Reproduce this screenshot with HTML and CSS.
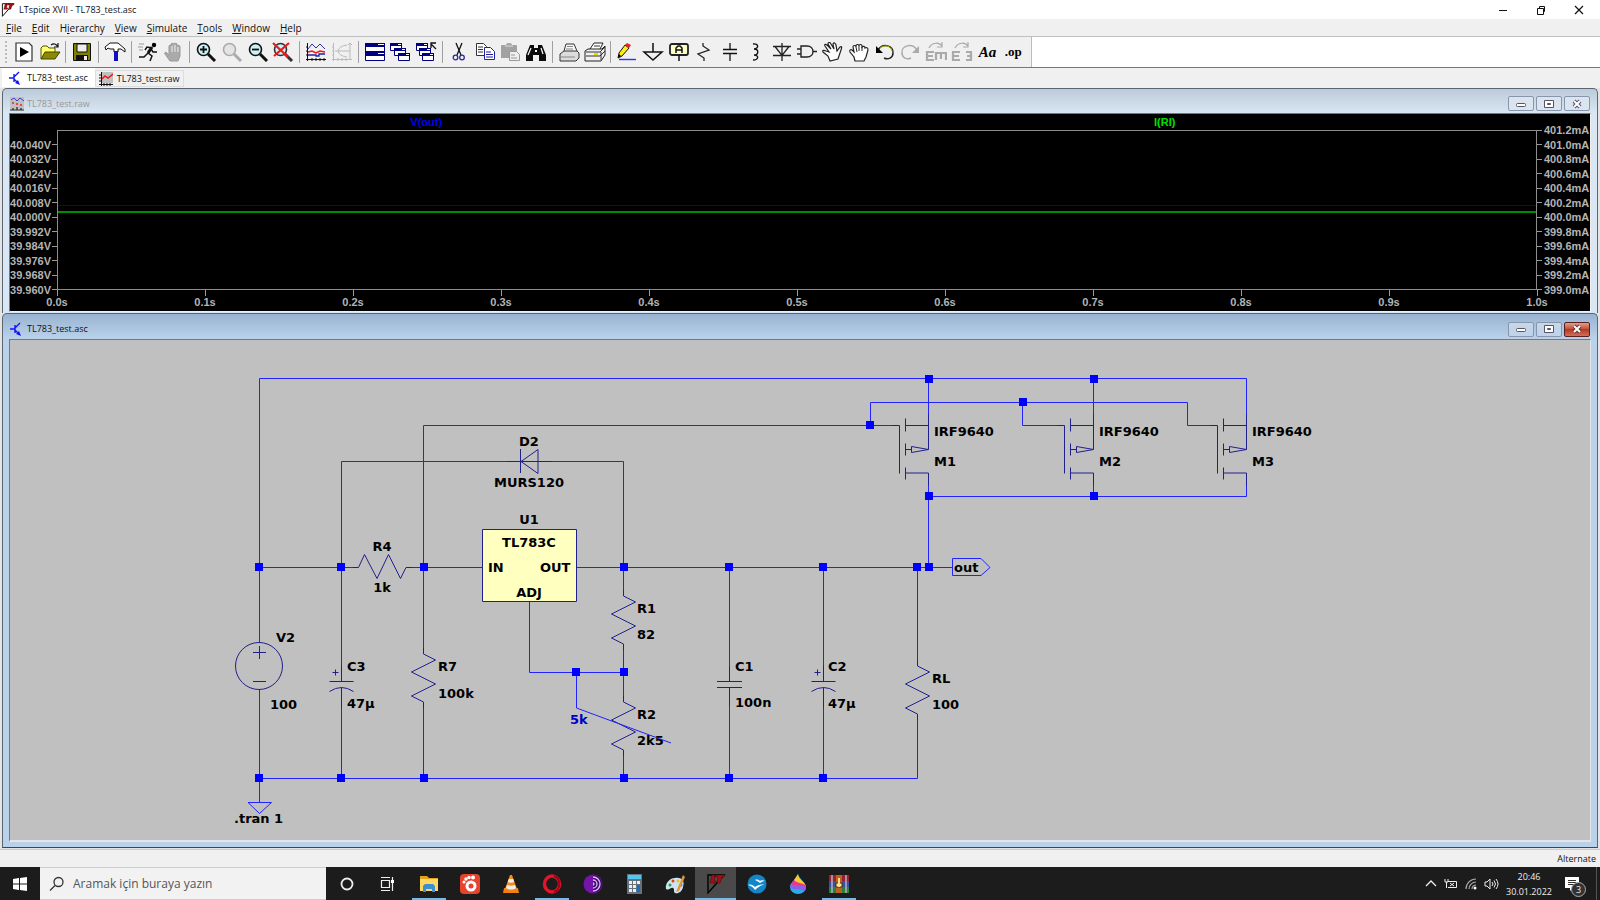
FILE: index.html
```html
<!DOCTYPE html>
<html lang="tr">
<head>
<meta charset="utf-8">
<title>LTspice XVII - TL783_test.asc</title>
<link rel="stylesheet" href="styles.css">
</head>
<body>
<svg class="defs" aria-hidden="true">
  <defs>
    <symbol id="lt-logo" viewBox="0 0 20 20"><path d="M2 1V19L18 1Z" fill="none" stroke="currentColor" stroke-width="1.4"/><path d="M6 1 4 9h5l1-2H8l1-6zM10 1l-1 2h3l-1 6h3l2-6h2l1-2z" fill="#a01018" stroke="#500" stroke-width=".5"/></symbol>
    <symbol id="transistor" viewBox="0 0 14 14"><path d="M0 7h5M5 3v8M5 6l5-5M5 8l4 4" fill="none" stroke="#1414f0" stroke-width="1.4"/><path d="M11 14 6 12l3-3z" fill="#1414f0"/></symbol>
    <symbol id="wave-doc" viewBox="0 0 14 14"><path d="M0 0h14v12H0z" fill="#c0c0c0"/><path d="M1 3 4 1l3 3 3-3 4 3" fill="none" stroke="#3c3ce0"/><path d="M2 6h2M6 7h2M10 8h2" stroke="#f02020" stroke-width="1.5"/><path d="M0 13h14M3 11v2M7 10v3M11 11v2" stroke="#222" stroke-width="1.2"/></symbol>
    <symbol id="lens" viewBox="0 0 22 20"><circle cx="8.500" cy="7.500" r="6" stroke="currentColor" stroke-width="1.6"/><path d="m13 12 7 7" stroke="currentColor" stroke-width="3"/></symbol>
    <symbol id="fist" viewBox="0 0 22 20"><path d="M7 19 6 15 2 10c-1-2 1-3 2-2l2 2-1-5c0-2 3-2 3 0V4c0-2 3-2 3 0 0-2 3-2 3 0v1c1-1 3-1 3 1 2-1 3 0 3 2l-2 7-2 4z" fill="#fff" stroke="#222" stroke-width="1.2"/><path d="m8 5 1 5M11 4v5M14 5v4" stroke="#222"/></symbol>
    <symbol id="win-pane" viewBox="0 0 12 8"><path d="M.5.5h11v7H.500z" fill="#fff" stroke="#000080"/><path d="M0 0h12v3H0z" fill="#000080"/><path d="M8 1.500h3" stroke="#fff"/></symbol>
    <g id="node"><path d="M-4-4h8v8h-8z"/></g>
    <path id="zigzag" d="M.5-6V0L12.500 6l-24 12 24 12-24 12L.500 48v6"/>
    <g id="fet"><path d="M-29 0V48M-23-7v13M-23 18v12M-23 42v12M-23 0H0M0-11V24M-23 24h6M-17 21v6L0 24ZM-23 47.500H0v12M-36 0h7"/></g>
    <g id="polar-cap"><path d="M0-16V0M-12 0h24M-12 10Q0 2 12 10M0 6v20M-9-9h6M-6-12v6"/></g>
  </defs>
</svg>

<header class="titlebar">
  <svg class="title-icon"><use href="#lt-logo"/></svg>
  <h1 class="app-title">LTspice XVII - TL783_test.asc</h1>
  <div class="caption-buttons">
    <button class="caption" aria-label="Minimize"><svg width="10" height="10"><path d="M1 5.500h8" stroke="#111"/></svg></button>
    <button class="caption" aria-label="Restore"><svg width="10" height="10"><path d="M1.500 3.500h6v6h-6zM3.500 3V1.500h5v5H8" fill="none" stroke="#111"/></svg></button>
    <button class="caption" aria-label="Close"><svg width="10" height="10"><path d="m1 1 8 8M9 1 1 9" stroke="#111" stroke-width="1.200"/></svg></button>
  </div>
</header>

<nav class="menubar">
  <button><u>F</u>ile</button><button><u>E</u>dit</button><button>H<u>i</u>erarchy</button><button><u>V</u>iew</button><button><u>S</u>imulate</button><button><u>T</u>ools</button><button><u>W</u>indow</button><button><u>H</u>elp</button>
</nav>

<div class="toolrow">
<div class="toolbar" role="toolbar" aria-label="Tools">
  <span class="grip"></span>
  <button aria-label="Run"><svg viewBox="0 0 22 20"><path d="M3 1h13l3 3v15H3z" fill="#fff" stroke="#333" stroke-width="1.200"/><path d="M7 5v10l9-5z" fill="#000"/></svg></button>
  <button aria-label="Open"><svg viewBox="0 0 22 20"><path d="M2 17V6l2-2h4l2 2h6v4" fill="#ffff70" stroke="#555500"/><path d="m2 17 4-7h15l-5 7z" fill="#8a8a00" stroke="#444400"/><path d="M12 3q4-3 7 2m0-4v4h-4" fill="none" stroke="#111" stroke-width="1.200"/></svg></button>
  <span class="sep"></span>
  <button aria-label="Save"><svg viewBox="0 0 22 20"><path d="M2.500 1.500h17v17h-17z" fill="#808000" stroke="#111"/><path d="M6 2h10v8H6z" fill="#eee" stroke="#111"/><path d="M5 13h12v5H5z" fill="#111"/><path d="M13 14h3v4h-3z" fill="#eee"/></svg></button>
  <span class="sep"></span>
  <button aria-label="Control Panel"><svg viewBox="0 0 22 20"><path d="M2 8 1 5l5-4h8l7 6v3l-4-3h-3v3h-4V7H6L4 6z" fill="#fff" stroke="#111"/><path d="M10 9h4v10h-4z" fill="#1010c0"/></svg></button>
  <span class="sep"></span>
  <button aria-label="Simulate"><svg viewBox="0 0 22 20"><circle cx="17" cy="3" r="2.200"/><path d="m15 5-4 6" stroke="#111" stroke-width="3"/><path d="m11 11 4 3-2 5M11 11l-4 4H2M15 6l-5-1-2 3M14 7l2 3h4" fill="none" stroke="#111" stroke-width="1.500"/><path d="M2 2h5M1 5h5M2 8h4" stroke="#999"/></svg></button>
  <button aria-label="Halt" disabled><svg viewBox="0 0 22 20"><path d="M7 19 2 12c-1-2 1-2 2-1l2 2V4c0-1 2-1 2 0V2c0-1 3-1 3 0 0-1 3-1 3 0v2c1-1 3-1 3 1v9l-2 5z" fill="#aaa" stroke="#999"/><path d="M9 4v6M12 3v7M15 5v5" stroke="#eee"/></svg></button>
  <span class="sep"></span>
  <button aria-label="Zoom in"><svg viewBox="0 0 22 20" fill="#c8f4f8" color="#111"><use href="#lens"/><path d="M5 7.500h7M8.500 4v7" stroke="#111" stroke-width="1.800"/></svg></button>
  <button aria-label="Pan" disabled><svg viewBox="0 0 22 20" fill="#e4e4e4" color="#aaa"><use href="#lens"/></svg></button>
  <button aria-label="Zoom out"><svg viewBox="0 0 22 20" fill="#c8f4f8" color="#111"><use href="#lens"/><path d="M5 7.500h7" stroke="#111" stroke-width="1.800"/></svg></button>
  <button aria-label="Zoom full"><svg viewBox="0 0 22 20" fill="#c8f4f8" color="#333"><use href="#lens"/><path d="m1 1 15 14M17 1 2 14" stroke="#f01818" stroke-width="2.200"/></svg></button>
  <span class="sep"></span>
  <button aria-label="Autorange"><svg viewBox="0 0 22 20"><path d="M2.500 1v18M1 17.500h20M1 5h2M1 9h2M1 13h2M7 16v3M11 16v3M15 16v3M19 16v3" stroke="#111"/><path d="m3 7 4-5 4 4 4-4 5 5" fill="none" stroke="#3030b0"/><path d="m3 10 4-1 4 2 4-2 5 1" fill="none" stroke="#f01818" stroke-width="1.400"/><path d="M3 13h8v1h3v-2h6" fill="none" stroke="#2020a0" stroke-width="1.300"/></svg></button>
  <button aria-label="Nyquist" disabled><svg viewBox="0 0 22 20"><path d="M2.500 1v18M1 17.500h20M1 5h2M1 9h2M1 13h2M7 16v3M11 16v3M15 16v3M19 1v17M17 3l2-2 2 2" stroke="#bbb" fill="none"/><path d="M16 3q-8 1-9 6 1 5 9 6M4 9h15" fill="none" stroke="#bbb"/></svg></button>
  <span class="sep"></span>
  <button aria-label="Tile windows"><svg viewBox="0 0 22 20"><path d="M1.500 1.500h19v17h-19z" fill="#fff" stroke="#000080"/><path d="M1 1h20v4H1zM1 9h20v5H1z" fill="#000080"/><path d="M14 2.500h6M14 11.500h6" stroke="#fff"/></svg></button>
  <button aria-label="Cascade windows"><svg viewBox="0 0 22 20"><use href="#win-pane" x="1" y="1" width="12" height="8"/><use href="#win-pane" x="5" y="6" width="12" height="8"/><use href="#win-pane" x="9" y="11" width="12" height="8"/></svg></button>
  <button aria-label="Close windows"><svg viewBox="0 0 22 20"><use href="#win-pane" x="1" y="1" width="12" height="8"/><use href="#win-pane" x="4" y="6" width="12" height="8"/><use href="#win-pane" x="7" y="11" width="12" height="8"/><path d="m21 7-5-5m0 4V1h5" fill="none" stroke="#111" stroke-width="1.300"/></svg></button>
  <span class="sep"></span>
  <button aria-label="Cut"><svg viewBox="0 0 22 20"><path d="m8 1 5 12M14 1 9 13" stroke="#111" stroke-width="1.300"/><circle cx="7.500" cy="15.500" r="2.300" fill="none" stroke="#2a2a9c" stroke-width="1.300"/><circle cx="14" cy="15.500" r="2.300" fill="none" stroke="#2a2a9c" stroke-width="1.300"/></svg></button>
  <button aria-label="Copy"><svg viewBox="0 0 22 20"><path d="M2.500 1.500h7l3 3v9h-10z" fill="#fff" stroke="#333"/><path d="M4 5h5M4 7.500h5M4 10h5" stroke="#333"/><path d="M10.500 5.500h6l4 4v8h-10z" fill="#fff" stroke="#20209a"/><path d="M12 10h5M12 12.500h7M12 15h7" stroke="#20209a"/></svg></button>
  <button aria-label="Paste" disabled><svg viewBox="0 0 22 20"><path d="M2 4q0-1 1-1h4q0-2 3-2t3 2h4q1 0 1 1v12H2z" fill="#a2a2a2"/><path d="M6 4h8" stroke="#ddd"/><path d="M10.500 9.500h7l3 3v6h-10z" fill="#eee" stroke="#999"/><path d="M12 13h4M12 16h6" stroke="#999"/></svg></button>
  <button aria-label="Find"><svg viewBox="0 0 22 20"><path d="M5 3h4v3h4V3h4l4 10v6h-7v-6h-6v6H1v-6z" fill="#0b0b0b"/><path d="M6 6 3 13M16 6l2 6" stroke="#fff" stroke-width="1.200"/><path d="M10 8h2v2h-2z" fill="#fff"/></svg></button>
  <span class="sep"></span>
  <button aria-label="Print"><svg viewBox="0 0 22 20"><path d="m6 9 2-7h8l3 7" fill="#f8f8f8" stroke="#333"/><path d="m2 12 4-3h13l2 2v5l-3 3H2z" fill="#dcdcdc" stroke="#333"/><path d="M3 15h14M9 4.500h6M8 7h7" stroke="#888"/></svg></button>
  <button aria-label="Print setup"><svg viewBox="0 0 22 20"><path d="m6 7 4-6h9l-3 6" fill="#fff" stroke="#222"/><path d="m1 9 3-2h14l3-3v9l-4 6H1z" fill="#f0f0f0" stroke="#222"/><path d="M2 10h14l5-5M2 14h14l5-5M17 10v8M10 4h6" stroke="#333" fill="none"/><path d="M10 12h4" stroke="#dd0" stroke-width="2"/></svg></button>
  <span class="sep"></span>
  <button aria-label="Wire"><svg viewBox="0 0 22 20"><path d="M2 16 3 11 9 3l4 3-7 8z" fill="#ffee10" stroke="#111"/><path d="m9 3 2-2 4 2-2 3z" fill="#f02020"/><path d="m2 16 1-4 2 2z"/><path d="M3 17.500h17" stroke="#3030ff" stroke-width="1.400"/></svg></button>
  <button aria-label="Ground"><svg viewBox="0 0 22 20"><path d="M11 1v9M2 10h18l-9 8z" fill="none" stroke="#111" stroke-width="1.500"/></svg></button>
  <button aria-label="Label net"><svg viewBox="0 0 22 20"><rect x="2" y="2" width="18" height="11" rx="2" fill="#ffffc8" stroke="#222" stroke-width="1.800"/><path d="M8 11V6l2-2h2l2 2v5M8 8h6M11 13v6" fill="none" stroke="#111" stroke-width="1.500"/></svg></button>
  <button aria-label="Resistor"><svg viewBox="0 0 22 20"><path d="M10 1v3l6 4-11 4 6 4v3" fill="none" stroke="#222" stroke-width="1.300"/></svg></button>
  <button aria-label="Capacitor"><svg viewBox="0 0 22 20"><path d="M11 1v6M11 12v7" stroke="#111" stroke-width="1.300"/><path d="M4 7.500h14M4 11.500h14" stroke="#111" stroke-width="1.700"/></svg></button>
  <button aria-label="Inductor"><svg viewBox="0 0 22 20"><path d="M8 2c6-1 6 5 1 5 5 0 5 6 0 6 5 0 5 5-1 5" fill="none" stroke="#111" stroke-width="1.400"/></svg></button>
  <button aria-label="Diode"><svg viewBox="0 0 22 20"><path d="M11 1v18M2 13.500h18M2 4.500h18M4 4.500l7 9 7-9" fill="none" stroke="#222" stroke-width="1.300"/></svg></button>
  <button aria-label="Component"><svg viewBox="0 0 22 20"><path d="M5 4h6c8 0 8 11 0 11H5zM1 7h4M1 12h4M17 9.500h4" fill="none" stroke="#222" stroke-width="1.400"/></svg></button>
  <button aria-label="Move"><svg viewBox="0 0 22 20"><path d="m8 19-2-5-5-4c-1-2 1-2 3-1l3 1-4-6c-1-2 1-2 2-1l4 4-3-5c0-2 2-2 3 0l3 5-1-5c1-2 2-1 3 1l1 6 3-4c2-1 2 0 1 3l-3 9z" fill="#fff" stroke="#222" stroke-width="1.200"/></svg></button>
  <button aria-label="Drag"><svg viewBox="0 0 22 20"><use href="#fist"/></svg></button>
  <button aria-label="Undo"><svg viewBox="0 0 22 20"><path d="M4 8c5-8 16-4 15 3 0 5-5 7-9 5" fill="none" stroke="#222" stroke-width="1.500"/><path d="M6 6c5-4 11-2 12 3" fill="none" stroke="#a0a000"/><path d="M2 4v7h7z"/></svg></button>
  <button aria-label="Redo" disabled><svg viewBox="0 0 22 20"><path d="M18 8C13 0 2 4 3 11c0 5 5 7 9 5" fill="none" stroke="#aaa" stroke-width="1.500"/><path d="M20 4v7h-7z" fill="#aaa"/></svg></button>
  <button aria-label="Rotate" disabled><svg viewBox="0 0 22 20"><path d="M9 10H2v8h7M2 14h6M11 18v-7h10v7M16 11v6" fill="none" stroke="#aaa" stroke-width="2.200"/><path d="M4 6c3-6 10-6 13-2m0-4v5h-5" fill="none" stroke="#aaa" stroke-width="1.200"/></svg></button>
  <button aria-label="Mirror" disabled><svg viewBox="0 0 22 20"><path d="M9 10H2v8h7M2 14h6M15 10h5v8h-5M20 14h-4" fill="none" stroke="#aaa" stroke-width="2.200"/><path d="M4 6c3-6 10-6 13-2m0-4v5h-5" fill="none" stroke="#aaa" stroke-width="1.200"/></svg></button>
  <button class="glyph glyph-text">Aa</button>
  <button class="glyph glyph-op">.op</button>
</div>
</div>

<div class="tabs" role="tablist">
  <button class="tab tab-active" role="tab"><svg class="tab-icon"><use href="#transistor"/></svg>TL783_test.asc</button>
  <button class="tab" role="tab"><svg class="tab-icon" viewBox="0 0 14 14"><path d="M2 0h12v11H2z" fill="#c0c0c0"/><path d="M2.500 0v14M0 12.500h14M0 3h2M0 6h2M0 9h2M5 11v3M8 11v3M11 11v3" stroke="#111"/><path d="m3 7 3-3 3 2 5-4" fill="none" stroke="#f01818" stroke-width="1.500"/></svg>TL783_test.raw</button>
</div>

<main class="mdi">
  <section class="child child-plot">
    <div class="child-title">
      <svg class="child-icon"><use href="#wave-doc"/></svg><h2>TL783_test.raw</h2>
      <div class="child-buttons">
        <button aria-label="Minimize"><svg width="12" height="10"><rect x="1.500" y="4.500" width="9" height="3" rx="1" fill="#fff" stroke="#556"/></svg></button>
        <button aria-label="Maximize"><svg width="12" height="10"><path d="M1.500 1.500h9v7h-9zM4.500 4.500h3v1h-3z" fill="#fff" stroke="#556"/></svg></button>
        <button aria-label="Close"><svg width="12" height="10"><path d="m3 2 6 6M9 2 3 8" stroke="#556" stroke-width="4"/><path d="m3 2 6 6M9 2 3 8" stroke="#fff" stroke-width="2"/></svg></button>
      </div>
    </div>
    <div class="plot">
      <div class="legend"><span class="trace-v">V(out)</span><span class="trace-i">I(RI)</span></div>
      <ul class="axis axis-left"><li class="blank"></li><li>40.040V</li><li>40.032V</li><li>40.024V</li><li>40.016V</li><li>40.008V</li><li>40.000V</li><li>39.992V</li><li>39.984V</li><li>39.976V</li><li>39.968V</li><li>39.960V</li></ul>
      <svg class="traces"><path d="M0 74.500h9999" stroke="#0000b0"/><path d="M0 81h9999" stroke="#008c00" stroke-width="2"/></svg>
      <ul class="axis axis-right"><li>401.2mA</li><li>401.0mA</li><li>400.8mA</li><li>400.6mA</li><li>400.4mA</li><li>400.2mA</li><li>400.0mA</li><li>399.8mA</li><li>399.6mA</li><li>399.4mA</li><li>399.2mA</li><li>399.0mA</li></ul>
      <ul class="axis-time"><li>0.0s</li><li>0.1s</li><li>0.2s</li><li>0.3s</li><li>0.4s</li><li>0.5s</li><li>0.6s</li><li>0.7s</li><li>0.8s</li><li>0.9s</li><li>1.0s</li></ul>
    </div>
  </section>

  <section class="child child-schematic">
    <div class="child-title">
      <svg class="child-icon"><use href="#transistor"/></svg><h2>TL783_test.asc</h2>
      <div class="child-buttons">
        <button aria-label="Minimize"><svg width="12" height="10"><rect x="1.500" y="4.500" width="9" height="3" rx="1" fill="#fff" stroke="#556"/></svg></button>
        <button aria-label="Maximize"><svg width="12" height="10"><path d="M1.500 1.500h9v7h-9zM4.500 4.500h3v1h-3z" fill="#fff" stroke="#556"/></svg></button>
        <button class="close-active" aria-label="Close"><svg width="12" height="10"><path d="m3 2 6 6M9 2 3 8" stroke="#633" stroke-width="4"/><path d="m3 2 6 6M9 2 3 8" stroke="#fff" stroke-width="2"/></svg></button>
      </div>
    </div>
    <svg class="schematic">
      <g transform="translate(-10 -340)">
        <g class="wire">
          <path d="M259.500 643V378.500H1246.500V415M928.500 378.500V415M1093.500 378.500V415"/>
          <path d="M423.500 648V425.500H893M870.500 425.500V402.500H1187.500V425.500H1211M1022.500 402.500V425.500H1058"/>
          <path d="M341.500 666V461.500H507M552 461.500H623.500V590"/>
          <path d="M928.500 485V567.500M928.500 496.500H1246.500V485M1093.500 485V496.500"/>
          <path d="M259.500 567.500H353M412 567.500H482M577 567.500H952.500M952.500 558.500H981L990 567.500 981 575.500H952.500Z"/>
          <path d="M259.500 689V802M248 802.500H271.500L259.500 813.500ZM259.500 778.500H917.500V719M341.500 706V778M423.500 708V778M623.500 754V778M729.500 567V666M729.500 706V778M823.500 567V666M823.500 706V778M917.500 567V660"/>
          <path d="M529.500 602V672.500H623.500M623.500 648V696M576.500 672V708"/>
        </g>
        <g class="part">
          <path d="M482.500 529.500h94v72h-94z" class="chip"/>
          <path d="M507 461.500h45M520.500 449v24M521 461.500l17-12v24Z"/>
          <path d="M353 567.500h5.500l6-13 12.500 24 11.500-24 12 24 5.500-11h6"/>
          <use href="#zigzag" x="623" y="596"/><use href="#zigzag" x="623" y="702"/><use href="#zigzag" x="423" y="654"/><use href="#zigzag" x="917" y="666"/>
          <circle cx="259" cy="666" r="23.500"/><path d="M253 652.500h13M259.500 646v13M253 681.500h13"/>
          <use href="#polar-cap" x="341.500" y="681.500"/><use href="#polar-cap" x="823.500" y="681.500"/>
          <path d="M729.500 666v15M717 681.500h25M717 687.500h25M729.500 688v18"/>
          <use href="#fet" x="928.500" y="425.500"/><use href="#fet" x="1093.500" y="425.500"/><use href="#fet" x="1246.500" y="425.500"/>
        </g>
        <g class="nodes">
          <use href="#node" x="929" y="379"/><use href="#node" x="1094" y="379"/><use href="#node" x="1023" y="402"/><use href="#node" x="870" y="425"/><use href="#node" x="929" y="496"/><use href="#node" x="1094" y="496"/>
          <use href="#node" x="259" y="567"/><use href="#node" x="341" y="567"/><use href="#node" x="424" y="567"/><use href="#node" x="624" y="567"/><use href="#node" x="729" y="567"/><use href="#node" x="823" y="567"/><use href="#node" x="917" y="567"/><use href="#node" x="929" y="567"/>
          <use href="#node" x="576" y="672"/><use href="#node" x="624" y="672"/>
          <use href="#node" x="259" y="778"/><use href="#node" x="341" y="778"/><use href="#node" x="424" y="778"/><use href="#node" x="624" y="778"/><use href="#node" x="729" y="778"/><use href="#node" x="823" y="778"/>
        </g>
        <g class="labels">
          <g class="mid"><text x="529" y="446">D2</text><text x="529" y="487">MURS120</text><text x="529" y="524">U1</text><text x="529" y="547">TL783C</text><text x="529" y="597">ADJ</text><text x="382" y="551">R4</text><text x="382" y="592">1k</text></g>
          <text x="488" y="572">IN</text><text x="540" y="572">OUT</text>
          <text x="934" y="436">IRF9640</text><text x="934" y="466">M1</text>
          <text x="1099" y="436">IRF9640</text><text x="1099" y="466">M2</text>
          <text x="1252" y="436">IRF9640</text><text x="1252" y="466">M3</text>
          <text x="954" y="572">out</text>
          <text x="637" y="613">R1</text><text x="637" y="639">82</text><text x="637" y="719">R2</text><text x="637" y="745">2k5</text>
          <text x="570" y="724" class="note">5k</text>
          <text x="276" y="642">V2</text><text x="270" y="709">100</text>
          <text x="347" y="671">C3</text><text x="347" y="708">47µ</text>
          <text x="438" y="671">R7</text><text x="438" y="698">100k</text>
          <text x="735" y="671">C1</text><text x="735" y="707">100n</text>
          <text x="828" y="671">C2</text><text x="828" y="708">47µ</text>
          <text x="932" y="683">RL</text><text x="932" y="709">100</text>
          <text x="234" y="823">.tran 1</text>
        </g>
        <path class="wiper" d="M576.500 708 671 743"/>
      </g>
    </svg>
  </section>
</main>

<div class="statusbar"><span>Alternate</span></div>

<footer class="taskbar">
  <button class="start" aria-label="Start"><svg width="14" height="14"><path d="m0 2 6-1v5.500H0zM7 1l7-1v6.500H7zM0 7.500h6V13l-6-1zM7 7.500h7V14l-7-1z" fill="#fff"/></svg></button>
  <label class="search"><svg width="16" height="16" viewBox="0 0 16 16"><circle cx="9.500" cy="6" r="4.500" fill="none" stroke="#333" stroke-width="1.300"/><path d="M6 9.500 1 14.500" stroke="#333" stroke-width="1.300"/></svg><input type="text" placeholder="Aramak için buraya yazın" aria-label="Aramak için buraya yazın"></label>
  <div class="apps">
    <button aria-label="Cortana"><svg viewBox="0 0 20 20"><circle cx="10" cy="10" r="5.500" fill="none" stroke="#eee" stroke-width="1.800"/></svg></button>
    <button aria-label="Task View"><svg viewBox="0 0 20 20"><path d="M3.500 6.500h8v7h-8zM3 3.500h9M3 16.500h9M14.500 3v14" fill="none" stroke="#eee" stroke-width="1.200"/><path d="M13 6h3v3h-3z" fill="#fff"/></svg></button>
    <button class="running" aria-label="Explorer"><svg viewBox="0 0 20 20"><path d="M1 2h7l2 2h9v5H1z" fill="#e5a01c"/><path d="M1 5h18v12H1z" fill="#ffd861"/><path d="M4 18v-6l2-2h8l2 2v6h-3v-3H7v3z" fill="#3c8fd0"/></svg></button>
    <button aria-label="GOM Player"><svg viewBox="0 0 20 20"><rect width="20" height="20" rx="4" fill="#e8432c"/><circle cx="11" cy="12" r="5.500" fill="#fff"/><circle cx="11" cy="12" r="2.500" fill="#e8432c"/><circle cx="4" cy="8" r="1.500" fill="#fff"/><circle cx="6" cy="5" r="1.700" fill="#fff"/><circle cx="9" cy="3.500" r="1.700" fill="#fff"/><circle cx="13" cy="3.500" r="2" fill="#fff"/></svg></button>
    <button aria-label="VLC"><svg viewBox="0 0 20 20"><path d="m3 14-1 5h16l-1-5z" fill="#f08010"/><path d="m9 1-5 14c3 2 9 2 12 0L11 1z" fill="#f58a18"/><path d="m7.800 5-1 3c2 1 4 1 6.400 0l-1-3zM6 11l-1 3c3 2 7 2 10 0l-1-3c-3 1-5 1-8 0z" fill="#eee"/></svg></button>
    <button class="running" aria-label="Opera"><svg viewBox="0 0 20 20"><ellipse cx="10" cy="10" rx="7.500" ry="8" fill="none" stroke="#e3152b" stroke-width="3.500"/><path d="M12 2c7 2 7 14 0 16" stroke="#a00014" stroke-width="2" fill="none"/></svg></button>
    <button aria-label="Tor Browser"><svg viewBox="0 0 20 20"><circle cx="10" cy="10" r="9.500" fill="#7414a8"/><path d="M10 1a9 9 0 0 1 0 18z" fill="#3c0a68"/><path d="M10 3a7 7 0 0 1 0 14M10 6a4 4 0 0 1 0 8M10 9a1 1 0 0 1 0 2" stroke="#e2b8ff" fill="none" stroke-width="1.300"/></svg></button>
    <button aria-label="Calculator"><svg viewBox="0 0 20 20"><path d="M3 0h15v20H3z" fill="#65727d"/><path d="M4 1h13v4H4z" fill="#50c8f0"/><path d="M5 7h3v3H5zM9 7h3v3H9zM13 7h3v3h-3zM5 11h3v3H5zM9 11h3v3H9zM5 15h3v3H5zM9 15h3v3H9z" fill="#eee"/><path d="M13 11h3v7h-3z" fill="#1470c0"/></svg></button>
    <button aria-label="Paint"><svg viewBox="0 0 20 20"><path d="M10 4c7-1 10 3 8 9-1 5-5 7-8 6-2-1 0-4-2-5s-4 3-7 1C0 10 4 4 10 4z" fill="#cde5f2"/><circle cx="5" cy="11" r="1.500" fill="#30a030"/><circle cx="8" cy="7" r="1.500" fill="#e04020"/><circle cx="13" cy="7" r="1.500" fill="#f0c010"/><circle cx="16" cy="11" r="1.500" fill="#3070e0"/><path d="m18 1-7 17 3-1 6-14z" fill="#e09440"/></svg></button>
    <button class="running current" aria-label="LTspice"><svg viewBox="0 0 20 20" color="#000"><use href="#lt-logo"/></svg></button>
    <button aria-label="OpenOffice"><svg viewBox="0 0 20 20"><circle cx="10" cy="10" r="9.500" fill="#1386c8"/><path d="M1 11c3-1 5 0 7 2 3-2 6-3 9-2-3 0-6 2-9 5-2-3-4-4-7-5zM8 6c2-1 4 0 5 1 1-1 3-1 5 0-2 0-3 1-5 2-1-1-3-2-5-3z" fill="#fff"/></svg></button>
    <button aria-label="Paint 3D"><svg viewBox="0 0 20 20"><path d="M10 0c1 5 8 8 8 13a8 7 0 0 1-16 0C2 8 9 5 10 0z" fill="#28aef0"/><path d="M6 6c3 5 9 3 12 7-1-5-8-8-8-13z" fill="#ffc928"/><path d="M3 10c4 4 11 1 15 5V12C15 8 9 10 6 6z" fill="#e8388c"/><path d="M2 13c4 4 10 1 15 4l1-4C13 10 8 13 3 10z" fill="#9060e0"/></svg></button>
    <button class="running" aria-label="WinRAR"><svg viewBox="0 0 20 20"><path d="M0 1h20v6H0z" fill="#9c2030"/><path d="M0 7h20v6H0z" fill="#3850a8"/><path d="M0 13h20v6H0z" fill="#2c8038"/><path d="M3 1v18M17 1v18" stroke="#b8b0c0" stroke-width="1.500"/><path d="M7 1h6v18H7z" fill="#b86420"/><path d="M7 9h6v4H7z" fill="#fff0a0" stroke="#4c2800"/><path d="M10 4v9" stroke="#ffe080" stroke-width="2"/></svg></button>
  </div>
  <div class="tray">
    <button aria-label="Hidden icons"><svg width="12" height="12"><path d="m1 8 5-5 5 5" fill="none" stroke="#eee" stroke-width="1.300"/></svg></button>
    <button aria-label="Battery"><svg width="14" height="12"><path d="M4 3.500h8.500v6H4M1 1v3h3V1M2.500 4v6M6 5l4 3M10 5 6 8" fill="none" stroke="#eee"/></svg></button>
    <button aria-label="Wi-Fi"><svg width="12" height="12"><path d="M1 11A10 10 0 0 1 11 1M4 11a7 7 0 0 1 7-7M7 11a4 4 0 0 1 4-4" fill="none" stroke="#aaa" stroke-width="1.200"/><circle cx="10" cy="10" r="1.500" fill="#fff"/></svg></button>
    <button aria-label="Volume"><svg width="15" height="12"><path d="M1 4v4h2l3 3V1L3 4zM8 4q2 2 0 4M10 2.500q3 3.500 0 7M12 1q4 5 0 10" fill="none" stroke="#eee"/></svg></button>
    <button class="clock"><span>20:46</span><span>30.01.2022</span></button>
    <button class="notify" aria-label="Notifications"><svg width="14" height="14"><path d="M0 0h14v11H8l-3 3v-3H0z" fill="#fff"/><path d="M3 3.500h8M3 5.500h8M3 7.500h6" stroke="#333"/></svg><span class="badge">3</span></button>
  </div>
</footer>
</body>
</html>
```
FILE: styles.css
```css
* { box-sizing: border-box; }
body {
  margin: 0;
  height: 100vh;
  display: flex;
  flex-direction: column;
  overflow: hidden;
  background: #f0f0f0;
  color: #111;
  font: 9px/16px "Open Sans", "Noto Sans", sans-serif;
}
button {
  margin: 0;
  padding: 0;
  border: 0;
  background: none;
  color: inherit;
  font: inherit;
}
ul { margin: 0; padding: 0; list-style: none; }
h1, h2 { margin: 0; font-size: 9px; font-weight: 400; }
svg { display: block; }
.defs { position: absolute; width: 0; height: 0; }

.titlebar { display: flex; align-items: center; height: 19px; background: #fff; }
.title-icon { width: 14px; height: 14px; margin: 0 4px 0 1px; }
.caption-buttons { display: flex; margin-left: auto; padding-right: 2px; }
.caption { display: flex; justify-content: center; align-items: center; width: 38px; height: 18px; }

.menubar { display: flex; gap: 10px; height: 17px; padding-left: 6px; font-size: 10px; }

.toolrow { display: flex; height: 32px; background: #fff; border-top: 1px solid #c0c0c0; border-bottom: 1px solid #777; }
.toolbar {
  display: flex;
  align-items: center;
  flex: 0 1 1032px;
  padding: 0 5px 0 5px;
  background: #f0f0f0;
  border-right: 1px solid #bbb;
}
.toolbar button { display: flex; justify-content: center; flex: 1 1 0; min-width: 0; }
.toolbar svg { width: 22px; height: 20px; flex: none; }
.grip { width: 6px; height: 22px; border-left: 2px dotted #bbb; }
.sep { width: 7px; height: 22px; background: linear-gradient(90deg, transparent 3px, #a0a0a0 3px, #a0a0a0 4px, transparent 4px); }
.toolbar .glyph { font-family: "Liberation Serif", serif; font-weight: 700; line-height: 20px; color: #000; }
.toolbar .glyph-text { font-size: 15px; font-style: italic; }
.toolbar .glyph-op { font-size: 13px; }

.tabs { display: flex; align-items: flex-end; height: 20px; padding: 0 0 1px 2px; }
.tab { display: flex; align-items: center; gap: 4px; height: 17px; padding: 0 3px; border: 1px solid #ddd; }
.tab-active { height: 19px; gap: 4px; padding: 0 6px; background: #fff; border-color: #fff; line-height: 14px; }
.tab-icon { width: 14px; height: 14px; }

.mdi { flex: 1; display: flex; flex-direction: column; min-height: 0; padding: 0 2px 1px; background: #e4e4e4; border-bottom: 1px solid #ccc; }
.child {
  display: flex;
  flex-direction: column;
  border: 1px solid #5b6672;
  border-radius: 5px 5px 0 0;
  padding: 0 6px;
}
.child-plot { flex: 0 0 225px; border-bottom: 0; padding-bottom: 1px; background: linear-gradient(#bccbdb, #d9e6f3 24px); color: #999; }
.child-schematic { flex: 1; min-height: 0; border-bottom-color: #0b5a66; padding-bottom: 5px; background: linear-gradient(#98b3d1, #b9d1ea 24px); }
.child-title { display: flex; align-items: center; flex: none; height: 24px; padding-top: 5px; }
.child-schematic .child-title { height: 25px; }
.child-icon { width: 14px; height: 14px; margin: 0 3px 0 1px; }
.child-buttons { display: flex; gap: 2px; margin-left: auto; padding-right: 1px; }
.child-buttons button {
  display: flex;
  justify-content: center;
  align-items: center;
  width: 26px;
  height: 15px;
  border: 1px solid #8796ab;
  border-radius: 2px;
  background: linear-gradient(rgba(255,255,255,.4), rgba(255,255,255,.1));
}
.child-buttons .close-active { border-color: #5a2020; background: linear-gradient(#e0a090, #c04830 50%, #b83820 50%, #d07058); }

.plot {
  flex: 1;
  display: grid;
  grid-template: 16px 160px 1fr / 47px 1fr 53px;
  border: 1px solid;
  border-color: #777 #eee #eee #777;
  background: #000;
  color: #b4b4b4;
  font: bold 11px/14px "Liberation Sans", Arial, sans-serif;
}
.legend { grid-area: 1 / 2; display: grid; grid-template-columns: 1fr 1fr; padding-right: 3px; text-align: center; line-height: 17px; }
.trace-v { color: #0000f0; }
.trace-i { color: #00e000; }
.axis { display: flex; flex-direction: column; justify-content: space-between; margin: -7px 0; }
.axis li { display: flex; align-items: center; height: 14px; }
.axis-left { grid-area: 2 / 1; }
.axis-left li { justify-content: flex-end; gap: 1px; }
.axis li::before, .axis li::after { flex: none; height: 1px; background: #999; }
.axis-left li::after { content: ""; width: 5px; }
.axis-left .blank::after { content: none; }
.axis-right { grid-area: 2 / 3; }
.axis-right li { gap: 2px; }
.axis-right li::before { content: ""; width: 5px; }
.traces { grid-area: 2 / 2; width: 100%; height: 160px; border: 1px solid #8c8c8c; }
.axis-time { grid-area: 3 / 2; display: flex; justify-content: space-between; margin: 0 -15px; line-height: 12px; }
.axis-time li { width: 30px; text-align: center; }
.axis-time li::before { content: ""; display: block; width: 1px; height: 6px; margin: 0 auto; background: #999; }

.schematic { flex: 1; width: 100%; min-height: 0; border: 1px solid; border-width: 1px 1px 2px; border-color: #777 #e4e4e4 #e4e4e4 #777; background: #c0c0c0; }
.wire { fill: none; stroke: #2222ff; }
.wiper { fill: none; stroke: #2222ff; }
.part { fill: none; stroke: #20208c; }
.part .chip { fill: #ffffc0; }
.nodes { fill: #0000ff; }
.labels { fill: #000; font: bold 13px "DejaVu Sans", Verdana, sans-serif; }
.labels .mid { text-anchor: middle; }
.labels .note { fill: #0000c8; }

.statusbar { display: flex; justify-content: flex-end; height: 17px; padding-right: 4px; line-height: 18px; }

.taskbar { display: flex; height: 33px; background: #1c1c1c; color: #eee; }
.start { display: flex; align-items: center; justify-content: center; width: 40px; }
.search { display: flex; align-items: center; flex: 0 1 286px; gap: 8px; padding-left: 9px; background: #f2f2f2; border: 1px solid #ccc; border-width: 1px 0; }
.search input { flex: 1; min-width: 0; border: 0; padding: 0; background: none; outline: 0; font: 12px/16px "Open Sans", "Noto Sans", sans-serif; }
.search input::placeholder { color: #555; opacity: 1; }
.apps { display: flex; }
.apps button { display: flex; align-items: center; justify-content: center; width: 41px; }
.apps svg { width: 20px; height: 20px; }
.apps .running { background: linear-gradient(#76b9ed, #76b9ed) center bottom / 34px 2px no-repeat; }
.apps .current { background: linear-gradient(#76b9ed, #76b9ed) center bottom / 100% 2px no-repeat #4a4a4a; }
.tray { display: flex; align-items: center; margin-left: auto; gap: 7px; padding-right: 3px; }
.clock { display: flex; flex-direction: column; width: 46px; line-height: 15px; text-align: center; }
.notify { position: relative; width: 38px; height: 33px; padding: 0 0 0 6px; border-right: 1px solid #555; }
.badge {
  position: absolute;
  left: 12px;
  bottom: 3px;
  width: 15px;
  height: 15px;
  border: 1px solid #aaa;
  border-radius: 50%;
  background: #333;
  line-height: 13px;
  text-align: center;
}
```
